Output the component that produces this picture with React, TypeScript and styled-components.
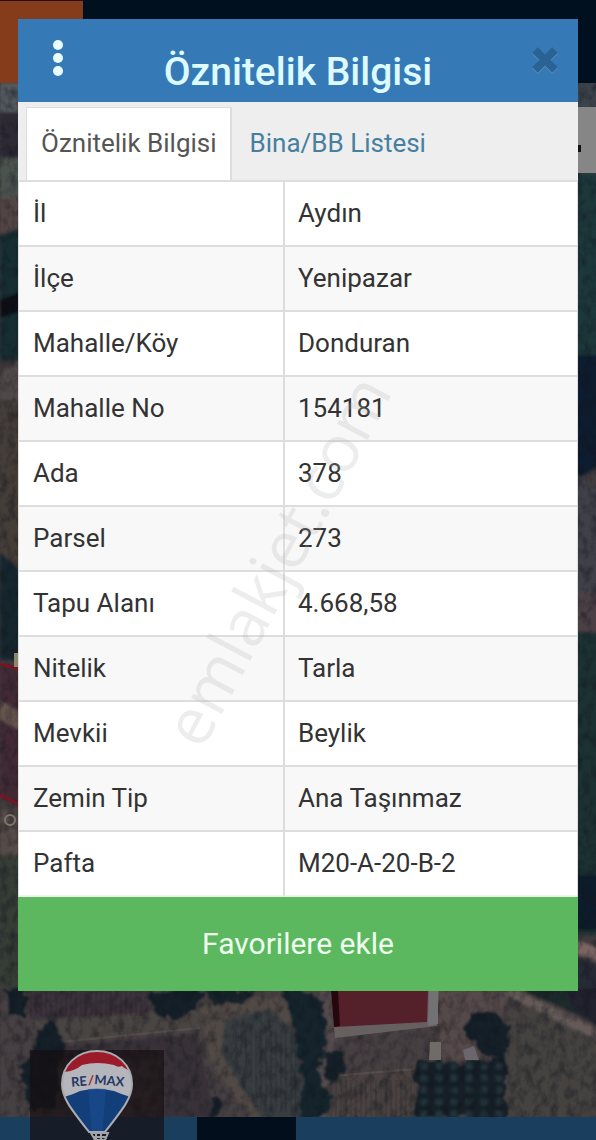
import React, { useState } from "react";
import styled, { createGlobalStyle } from "styled-components";

const GlobalStyle = createGlobalStyle`
  *, *::before, *::after { box-sizing: border-box; }
  body {
    margin: 0;
    background: #2b2d31;
    font-family: Roboto, "Liberation Sans", sans-serif;
    color: #333;
  }
`;

const Page = styled.div`
  position: relative;
  min-height: 100vh;
  padding: 19px 18px 149px;
  overflow: hidden;
`;

const Backdrop = styled.div`
  position: absolute;
  inset: 0;
  display: flex;
  flex-direction: column;
  justify-content: space-between;
`;

const TopBar = styled.div`
  position: relative;
  display: flex;
  height: 83px;
  background: #00101e;
`;

const TopAccent = styled.div`
  width: 83px;
  background: #843c1a;
  border-top: 1px solid #25100e;
`;

const BottomBar = styled.div`
  position: relative;
  display: flex;
  justify-content: flex-end;
  height: 23px;
  background: #1a3e5e;
`;

const BottomGap = styled.div`
  width: 99px;
  margin-right: 300px;
  background: #020e1b;
`;

const MapArt = styled.svg`
  position: absolute;
  inset: 0;
  width: 100%;
  height: 100%;
`;

const MapControl = styled.div`
  position: absolute;
  top: 107px;
  right: 0;
  width: 30px;
  height: 66px;
  padding: 38px 0 0 10px;
  background: #868686;

  &::before {
    content: "";
    display: block;
    width: 5px;
    height: 7px;
    background: #111;
  }
`;

const BrandPanel = styled.div`
  position: absolute;
  left: 30px;
  bottom: 0;
  width: 134px;
  height: 90px;
  background: rgba(20, 14, 16, 0.68);

  svg {
    display: block;
    width: 100%;
    height: 100%;
  }
`;

const Dialog = styled.section`
  position: relative;
  background: #fff;
`;

const Header = styled.header`
  display: grid;
  grid-template-columns: 80px 1fr 80px;
  height: 83px;
  background: #357ab7;
`;

const IconButton = styled.button`
  display: flex;
  justify-content: center;
  padding: 20px 0 0;
  border: 0;
  background: none;
  cursor: pointer;
`;

const CloseButton = styled(IconButton)`
  padding: 26px 0 0 14px;
`;

const Title = styled.h1`
  margin: 0;
  padding-top: 30px;
  font-size: 39px;
  line-height: 46px;
  font-weight: 500;
  text-align: center;
  white-space: nowrap;
  color: #dcfaff;
`;

const Tabs = styled.div`
  display: flex;
  height: 80px;
  padding: 5px 8px 0;
  background: #eee;
  border-bottom: 2px solid #ddd;
`;

const Tab = styled.button<{ $active: boolean }>`
  height: 73px;
  padding: ${(p) => (p.$active ? "0 13px 3px 14px" : "0 18px 2px")};
  border: 0 solid #ddd;
  border-width: ${(p) => (p.$active ? "1px 2px 0 1px" : "0")};
  background: ${(p) => (p.$active ? "#fff" : "transparent")};
  color: ${(p) => (p.$active ? "#555" : "#467f9f")};
  font-family: inherit;
  font-size: 26px;
  line-height: 36px;
  cursor: pointer;
`;

const Table = styled.table`
  width: 100%;
  border-collapse: separate;
  border-spacing: 0;
  table-layout: fixed;
  border: solid #ddd;
  border-width: 0 1px;
  font-size: 26px;
  line-height: 36px;
`;

const Row = styled.tr`
  background: #fff;

  &:nth-child(even) {
    background: #f8f8f8;
  }

  &:last-child > * {
    border-bottom-color: #eef4ee;
  }
`;

const NameCell = styled.th`
  width: 266px;
  height: 65px;
  padding: 0 14px 1px;
  border: solid #ddd;
  border-width: 0 2px 2px 0;
  font-weight: 400;
  text-align: left;
`;

const ValueCell = styled.td`
  padding: 0 13px 1px;
  border-bottom: 2px solid #ddd;
`;

const FavoriteButton = styled.button`
  display: block;
  width: 100%;
  height: 94px;
  padding: 0;
  border: 0;
  background: #5cb85f;
  color: #effff0;
  font-family: inherit;
  font-size: 30px;
  line-height: 40px;
  cursor: pointer;
`;

const Watermark = styled.span`
  position: absolute;
  top: 541px;
  left: 46%;
  font-family: "Open Sans", "Noto Sans", sans-serif;
  font-size: 65px;
  line-height: 65px;
  white-space: nowrap;
  color: rgba(175, 175, 175, 0.22);
  transform: translate(-50%, -50%) rotate(-62deg);
  pointer-events: none;
`;

const rows = [
  ["İl", "Aydın"],
  ["İlçe", "Yenipazar"],
  ["Mahalle/Köy", "Donduran"],
  ["Mahalle No", "154181"],
  ["Ada", "378"],
  ["Parsel", "273"],
  ["Tapu Alanı", "4.668,58"],
  ["Nitelik", "Tarla"],
  ["Mevkii", "Beylik"],
  ["Zemin Tip", "Ana Taşınmaz"],
  ["Pafta", "M20-A-20-B-2"],
];

const tabs = ["Öznitelik Bilgisi", "Bina/BB Listesi"];

const orchard = Array.from({ length: 30 }, (_, i) => ({
  x: 424 + (i % 6) * 15,
  y: 1066 + Math.floor(i / 6) * 12,
}));

const SatelliteMap = () => (
  <MapArt viewBox="0 0 596 1140" preserveAspectRatio="xMidYMax slice" aria-hidden="true">
    <defs>
      <filter id="soft" x="-5%" y="-5%" width="110%" height="110%">
        <feGaussianBlur stdDeviation="1.6" />
      </filter>
      <filter id="edge" colorInterpolationFilters="sRGB">
        <feTurbulence type="fractalNoise" baseFrequency="0.09" numOctaves="3" seed="4" result="n" />
        <feDisplacementMap in="SourceGraphic" in2="n" scale="14" xChannelSelector="R" yChannelSelector="G" />
        <feGaussianBlur stdDeviation="1" />
      </filter>
      <filter id="grain" x="0" y="0" width="100%" height="100%" colorInterpolationFilters="sRGB">
        <feTurbulence type="fractalNoise" baseFrequency="0.12 0.09" numOctaves="4" seed="9" />
        <feColorMatrix values="0 0 0 0 0.06  0 0 0 0 0.07  0 0 0 0 0.1  1 0 0 0 -0.4" />
      </filter>
      <pattern id="furrows" width="5" height="30" patternUnits="userSpaceOnUse">
        <path d="M1 0V30" stroke="#1f1c22" strokeWidth="1.5" opacity="0.5" />
      </pattern>
    </defs>
    <rect width="596" height="1140" fill="#403b3d" />
    <g filter="url(#soft)">
      <path d="M0 83H20V115H0Z" fill="#525a5f" />
      <path d="M0 112H20V158H0Z" fill="#2f2a35" />
      <path d="M0 158H20V198H0Z" fill="#4b5250" />
      <path d="M0 198H20V230L0 238Z" fill="#534445" />
      <path d="M0 235L20 228V360H0Z" fill="#172f30" />
      <path d="M0 300L20 292V312L0 318Z" fill="#070e18" />
      <path d="M0 374L20 360V400H0Z" fill="#514a48" />
      <path d="M0 400H20V570H0Z" fill="#443c38" />
      <path d="M0 552L20 570V660H0Z" fill="#17282f" />
      <path d="M0 664L20 668V808L0 798Z" fill="#432b34" />
      <path d="M0 700L20 712V730L0 720Z" fill="#65524d" />
      <path d="M0 810H20V868H0Z" fill="#544c47" />
      <path d="M0 855H20V990H0Z" fill="#363c36" />
      <path d="M576 83H600V108H576Z" fill="#3b4348" />
      <path d="M576 173H600V390H576Z" fill="#1c393a" />
      <path d="M576 355H600V465L576 480Z" fill="#111e2d" />
      <path d="M576 474L600 492V592H576Z" fill="#40404a" />
      <path d="M576 592H600V632H576Z" fill="#4c4145" />
      <path d="M576 632H600V935H576Z" fill="#1e3032" />
      <path d="M576 875H600V930H576Z" fill="#101b29" />
      <path d="M576 940L600 948V962L576 954Z" fill="#7a6562" />
      <path d="M576 958L600 965V1032L576 1020Z" fill="#282a34" />
    </g>
    <g filter="url(#soft)">
      <path d="M0 988H600V1120H0Z" fill="#474142" />
      <path d="M26 990H150V1018L30 1022Z" fill="#3b303a" />
      <path d="M60 1046L198 1034L215 1118H160V1060H55Z" fill="#383338" />
      <path d="M30 1020L200 1010V1030L60 1042Z" fill="#4a4442" />
      <path d="M200 1008L225 1000L290 995L300 1118H250L210 1060Z" fill="#514945" />
      <path d="M225 1020L270 1008L296 1035L310 1118H262L222 1055Z" fill="#373c40" />
      <path d="M320 990H335L338 1120H312Z" fill="#544c4e" />
      <path d="M439 991H510L480 1060H435Z" fill="#554a48" />
      <path d="M500 1018L540 1002L600 1034V1120H508Z" fill="#44423f" />
      <path d="M498 991L600 1042V1030L518 991Z" fill="#665a58" />
      <path d="M524 991L600 1025V988H524Z" fill="#1c292a" />
      <path d="M562 988H600V1028L580 1015Z" fill="#22242e" />
      <path d="M330 1075L418 1065V1120H325Z" fill="#48423f" />
    </g>
    <path d="M26 990H146V1016H26ZM332 1080H412V1118H332ZM232 1030H296V1112H262Z" fill="url(#furrows)" opacity="0.4" />
    <path d="M60 1042L200 1028M310 1078L414 1069" stroke="#5f5553" strokeWidth="2" opacity="0.7" />
    <g filter="url(#edge)" fill="#141f27">
      <path d="M150 991H205L195 1010L170 1020L155 1012Z" />
      <path d="M204 990H256L246 1002L216 1006Z" fill="#17232a" />
      <path d="M286 990H318L326 1028L320 1080L334 1105L320 1120H300L304 1084L296 1048Z" fill="#15242c" />
      <path d="M323 1050L342 1050L346 1075L328 1082Z" />
      <path d="M470 1014L492 1013L508 1025L507 1068L486 1055L466 1034Z" />
      <path d="M36 1030L54 1020L66 1044L60 1060L56 1110H28L20 1066L34 1050Z" />
      <path d="M4 990H26V1014H10Z" />
      <path d="M416 1062H506V1118H416Z" fill="#151f26" />
      <path d="M212 1100H220V1118H212Z" />
    </g>
    <g filter="url(#soft)" fill="#24343a">
      {orchard.map((tree) => (
        <circle key={`${tree.x}-${tree.y}`} cx={tree.x} cy={tree.y} r="4" />
      ))}
    </g>
    <rect width="596" height="1140" filter="url(#grain)" />
    <path d="M0 664L20 669M0 795L20 805" stroke="#7b1323" strokeWidth="3" fill="none" />
    <path d="M14 653H20V667H14Z" fill="#8d886b" />
    <circle cx="10" cy="820" r="5" fill="none" stroke="#7d746c" strokeWidth="2" />
    <path d="M331 991L335 1038L437 1026L439 991Z" fill="#676060" />
    <path d="M333 991H428L427 1022L335 1027Z" fill="#54202a" />
    <path d="M331 991H338L340 1026L334 1027Z" fill="#27070e" />
    <path d="M429 991H438V1024L428 1026Z" fill="#727174" />
    <path d="M430 1042H441V1060H429Z" fill="#716b67" />
    <path d="M463 1050L474 1046L479 1060H465Z" fill="#6b656e" />
  </MapArt>
);

const Balloon = () => (
  <svg viewBox="0 0 134 90" role="img" aria-label="RE/MAX">
    <defs>
      <clipPath id="envelope">
        <path d="M67 1C87 1 102 15 102 34C102 48 93 59 75 82H59C41 59 32 48 32 34C32 15 47 1 67 1Z" />
      </clipPath>
    </defs>
    <g clipPath="url(#envelope)">
      <rect x="30" width="74" height="84" fill="#b5b6bc" />
      <path d="M30 0H104V22Q96 20 92 16Q88 18 84 15Q67 11 52 15Q45 21 34 22Z" fill="#9c1b2b" />
      <path d="M30 48Q42 45 50 41Q67 37 84 41Q93 45 104 48L78 84H57Z" fill="#123e7a" />
      <path d="M58 39Q67 38 76 39L72 84H62Z" fill="#1d4f91" opacity="0.6" />
    </g>
    <path d="M67 1C87 1 102 15 102 34C102 48 93 59 75 82H59C41 59 32 48 32 34C32 15 47 1 67 1Z" fill="none" stroke="#a9abb1" strokeWidth="2" />
    <g fontFamily="Lato, sans-serif" fontWeight="700" fontSize="13" fill="#263766">
      <text x="41" y="36" transform="rotate(-5 50 32)">RE</text>
      <text x="58" y="35" fill="#a51c2e">/</text>
      <text x="64" y="34" transform="rotate(5 64 34)">MAX</text>
    </g>
    <path d="M61 83H78L75 90H65ZM66 84V90M71 84V90M63 87H77" fill="none" stroke="#a2a4a8" strokeWidth="2" />
  </svg>
);

export default function App() {
  const [active, setActive] = useState(0);

  return (
    <Page>
      <GlobalStyle />
      <Backdrop>
        <SatelliteMap />
        <TopBar>
          <TopAccent />
        </TopBar>
        <MapControl />
        <BottomBar>
          <BottomGap />
        </BottomBar>
        <BrandPanel>
          <Balloon />
        </BrandPanel>
      </Backdrop>

      <Dialog role="dialog" aria-labelledby="dialog-title">
        <Header>
          <IconButton type="button" aria-label="Menü">
            <svg width="12" height="38" viewBox="0 0 12 38" fill="#e9fcff">
              <circle cx="6" cy="6" r="5" />
              <circle cx="6" cy="19" r="5" />
              <circle cx="6" cy="32" r="5" />
            </svg>
          </IconButton>
          <Title id="dialog-title">Öznitelik Bilgisi</Title>
          <CloseButton type="button" aria-label="Kapat">
            <svg width="30" height="31" viewBox="0 0 30 31" fill="none" strokeWidth="8">
              <path d="M5 6L25 26M25 6L5 26" stroke="#5792c3" />
              <path d="M5 5L25 25M25 5L5 25" stroke="#2a6293" />
            </svg>
          </CloseButton>
        </Header>
        <Tabs role="tablist">
          {tabs.map((label, i) => (
            <Tab key={label} type="button" role="tab" aria-selected={active === i} $active={active === i} onClick={() => setActive(i)}>
              {label}
            </Tab>
          ))}
        </Tabs>
        <Table>
          <tbody>
            {rows.map(([name, value]) => (
              <Row key={name}>
                <NameCell scope="row">{name}</NameCell>
                <ValueCell>{value}</ValueCell>
              </Row>
            ))}
          </tbody>
        </Table>
        <FavoriteButton type="button">Favorilere ekle</FavoriteButton>
        <Watermark>emlakjet.com</Watermark>
      </Dialog>
    </Page>
  );
}
